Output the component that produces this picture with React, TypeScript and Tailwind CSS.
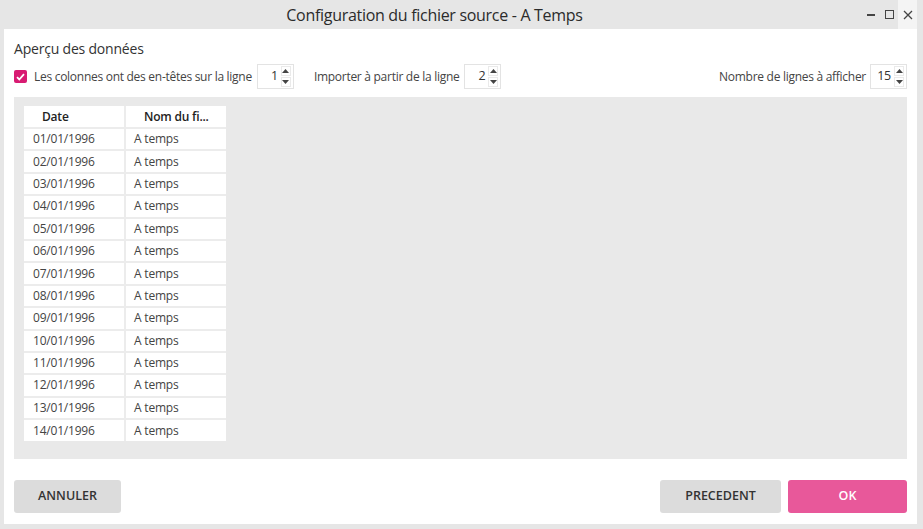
import React from 'react';

const rows = Array.from({ length: 14 }, (_, i) => `${String(i + 1).padStart(2, '0')}/01/1996`);

const Spinner: React.FC<{ value: number }> = ({ value }) => (
  <div className="flex h-[25px] w-[37px] items-stretch border border-[#e3e3e3] bg-white">
    <div className="flex flex-1 items-center justify-end pr-[3px] text-[12.5px] text-[#333]">{value}</div>
    <div className="flex w-[12px] flex-col justify-center gap-[1px] pr-[2px]">
      <div className="flex h-[10px] items-center justify-center border border-[#eaeaea]">
        <svg width="7" height="4" viewBox="0 0 7 4"><path d="M3.5 0L7 4H0z" fill="#444" /></svg>
      </div>
      <div className="flex h-[10px] items-center justify-center border border-[#eaeaea]">
        <svg width="7" height="4" viewBox="0 0 7 4"><path d="M0 0h7L3.5 4z" fill="#444" /></svg>
      </div>
    </div>
  </div>
);

export default function App() {
  return (
    <div
      className="flex h-[529px] w-[923px] flex-col bg-[#e6e6e6] text-[#333]"
      style={{ fontFamily: '"Open Sans", "Noto Sans", sans-serif' }}
    >
      {/* title bar */}
      <div className="relative flex h-[29px] shrink-0 items-center justify-center pr-[54px]">
        <span className="text-[16px] font-medium tracking-[-0.3px] text-[#2b2b2b]">Configuration du fichier source - A Temps</span>
        <div className="absolute right-[6px] top-0 flex h-[29px] items-center">
          <div className="flex h-[29px] w-[18px] items-center justify-center">
            <div className="h-[2px] w-[8px] bg-[#444]" />
          </div>
          <div className="flex h-[29px] w-[18px] items-center justify-center">
            <div className="h-[9px] w-[9px] border-[1.5px] border-[#444]" />
          </div>
          <div className="flex h-[29px] w-[19px] items-center justify-center bg-[#f4f4f4]">
            <svg width="10" height="10" viewBox="0 0 10 10">
              <path d="M1 1l8 8M9 1l-8 8" stroke="#444" strokeWidth="1.3" />
            </svg>
          </div>
        </div>
      </div>

      {/* content */}
      <div className="mb-[5px] ml-[4px] mr-[6px] flex flex-1 flex-col bg-white px-[10px]">
        <div className="pt-[9px] text-[14px] font-medium tracking-[-0.2px] text-[#333]">Aperçu des données</div>

        <div className="mt-[5px] flex h-[25px] items-center text-[12px] tracking-[-0.28px] text-[#444]">
          <div className="flex h-[13px] w-[13px] items-center justify-center rounded-[2px] bg-[#d81b72]">
            <svg width="9" height="8" viewBox="0 0 9 8">
              <path d="M1 4.2l2.3 2.3L8 1.2" stroke="#fff" strokeWidth="1.8" fill="none" />
            </svg>
          </div>
          <span className="ml-[7px] mr-[5px]">Les colonnes ont des en-têtes sur la ligne</span>
          <Spinner value={1} />
          <span className="ml-[20px] mr-[5px]">Importer à partir de la ligne</span>
          <Spinner value={2} />
          <span className="ml-auto mr-[4px]">Nombre de lignes à afficher</span>
          <Spinner value={15} />
        </div>

        <div className="mt-[8px] h-[362px] bg-[#e9e9e9] pl-[10px] pt-[9px]">
          <table className="border-collapse bg-white text-[12px] tracking-[-0.2px]">
            <thead>
              <tr className="h-[22px]">
                <th className="w-[101px] border-b-2 border-r-2 border-[#ececec] pl-[18px] text-left font-semibold text-[#222]">
                  Date
                </th>
                <th className="w-[101px] border-b-2 border-[#ececec] pl-[18px] text-left font-semibold text-[#222]">
                  Nom du fi...
                </th>
              </tr>
            </thead>
            <tbody>
              {rows.map((d, i) => (
                <tr key={d} className="h-[22.4px]">
                  <td className={`border-r-2 border-[#ececec] pl-[9px] text-[#444] ${i < rows.length - 1 ? 'border-b-2' : ''}`}>{d}</td>
                  <td className={`border-[#ececec] pl-[8px] text-[#444] ${i < rows.length - 1 ? 'border-b-2' : ''}`}>A temps</td>
                </tr>
              ))}
            </tbody>
          </table>
        </div>

        <div className="mt-[21px] flex items-center">
          <button className="h-[33px] w-[107px] rounded-[3px] bg-[#dcdcdc] text-[12.5px] font-semibold text-[#333]">ANNULER</button>
          <button className="ml-auto h-[33px] w-[121px] rounded-[3px] bg-[#dcdcdc] text-[12.5px] font-semibold text-[#333]">PRECEDENT</button>
          <button className="ml-[7px] h-[33px] w-[119px] rounded-[3px] bg-[#e8589a] text-[12.5px] font-semibold text-white">OK</button>
        </div>
      </div>
    </div>
  );
}
